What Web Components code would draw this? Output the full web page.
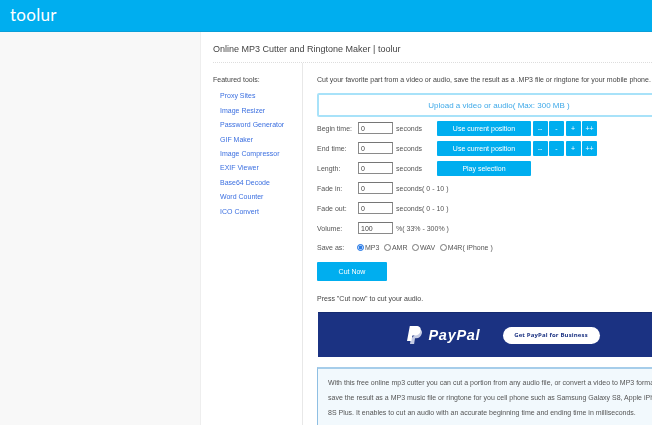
<!DOCTYPE html>
<html>
<head>
<meta charset="utf-8">
<title>toolur</title>
<style>
html, body { margin: 0; height: 425px; overflow: hidden; background: #f8f8f8; }
body { font: 7px "Liberation Sans", Arial, sans-serif; color: #444; }
tool-page { filter: blur(.3px); }
</style>
</head>
<body>
<tool-header></tool-header>
<tool-page>
  <tool-sidebar slot="side"></tool-sidebar>
  <cutter-form slot="main"></cutter-form>
</tool-page>

<script>
'use strict';

class ToolHeader extends HTMLElement {
  constructor() {
    super();
    this.attachShadow({mode: 'open'}).innerHTML = `
      <style>
        :host { display: block; height: 31px; background: #00aeef; border-bottom: 1px solid #0a9fd8; box-sizing: content-box; }
        a { display: block; padding: 4px 0 0 10px; font: 400 17px/22px Lato, sans-serif; letter-spacing: .3px; color: #fff; }
      </style>
      <a>toolur</a>`;
  }
}

class ToolPage extends HTMLElement {
  constructor() {
    super();
    this.attachShadow({mode: 'open'}).innerHTML = `
      <style>
        :host { display: block; margin-left: 200px; width: 700px; height: 393px; background: #fff; border-left: 1px solid #eee; box-sizing: border-box; padding: 0 12px; }
        h1 { margin: 0; height: 31px; box-sizing: border-box; padding-top: 11px; font: 400 9px/13px "Liberation Sans", sans-serif; color: #444; border-bottom: 1px dotted #ddd; }
        .cols { display: flex; }
        .side { width: 89px; flex: none; }
        .main { flex: 1; min-width: 0; border-left: 1px solid #e8e8e8; padding-left: 14px; }
      </style>
      <h1>Online MP3 Cutter and Ringtone Maker | toolur</h1>
      <div class="cols">
        <div class="side"><slot name="side"></slot></div>
        <div class="main"><slot name="main"></slot></div>
      </div>`;
  }
}

class ToolSidebar extends HTMLElement {
  constructor() {
    super();
    var tools = ['Proxy Sites', 'Image Resizer', 'Password Generator', 'GIF Maker', 'Image Compressor',
      'EXIF Viewer', 'Base64 Decode', 'Word Counter', 'ICO Convert'];
    this.attachShadow({mode: 'open'}).innerHTML = `
      <style>
        :host { display: block; padding-top: 10px; font: 7px/14.4px "Liberation Sans", sans-serif; }
        p { margin: 0 0 2px; color: #444; }
        a { display: block; margin-left: 7px; color: #3b6fe0; white-space: nowrap; }
      </style>
      <p>Featured tools:</p>
      ${tools.map(function(t) { return '<a>' + t + '</a>'; }).join('')}`;
  }
}

class FormRow extends HTMLElement {
  constructor() {
    super();
    this.attachShadow({mode: 'open'}).innerHTML = `
      <style>
        :host { display: flex; align-items: center; height: 20px; font: 7px "Liberation Sans", sans-serif; color: #555; white-space: nowrap; }
        .label { width: 41px; flex: none; }
        .field { display: flex; align-items: center; }
      </style>
      <span class="label"><slot name="label"></slot></span>
      <div class="field"><slot></slot></div>`;
  }
}

class BlueBtn extends HTMLElement {
  constructor() {
    super();
    this.attachShadow({mode: 'open'}).innerHTML = `
      <style>
        :host { display: flex; align-items: center; justify-content: center; height: 15px; background: #00aeef; color: #fff; border-radius: 1px; font: 7px "Liberation Sans", sans-serif; flex: none; }
      </style>
      <slot></slot>`;
  }
}

class NumBox extends HTMLElement {
  constructor() {
    super();
    this.attachShadow({mode: 'open'}).innerHTML = `
      <style>
        :host { display: block; width: 35px; height: 12px; box-sizing: border-box; border: 1px solid #8a8a8a; border-top-color: #767676; padding-left: 2px; font: 7px/11px "Liberation Sans", sans-serif; color: #444; background: #fff; flex: none; }
      </style>
      <slot></slot>`;
  }
}

class RadioOpt extends HTMLElement {
  constructor() {
    super();
    var on = this.hasAttribute('checked');
    this.attachShadow({mode: 'open'}).innerHTML = `
      <style>
        :host { display: inline-flex; align-items: center; margin-right: 4.5px; }
        i { display: block; width: 7px; height: 7px; box-sizing: border-box; margin-right: 1px; border-radius: 50%; border: 1px solid ${on ? '#2f7fe8' : '#777'}; background: ${on ? '#2f7fe8' : '#fff'}; box-shadow: ${on ? 'inset 0 0 0 .6px #fff' : 'none'}; }
      </style>
      <i></i><slot></slot>`;
  }
}

class PaypalBanner extends HTMLElement {
  constructor() {
    super();
    this.attachShadow({mode: 'open'}).innerHTML = `
      <style>
        :host { display: flex; align-items: center; width: 340px; height: 45px; background: #1b3282; box-sizing: border-box; border-top: 1px solid #142a70; margin-left: 1px; color: #fff; }
        svg { margin-left: 89px; flex: none; }
        b { margin-left: 6.5px; font: italic 700 14.5px "Liberation Sans", sans-serif; letter-spacing: .7px; width: 59px; flex: none; }
        span { margin-left: 15px; width: 97px; height: 17px; border-radius: 9px; background: #fff; color: #1b3282; display: flex; align-items: center; justify-content: center; font: 700 6px "Open Sans", sans-serif; letter-spacing: .15px; flex: none; }
      </style>
      <svg width="15" height="18" viewBox="0 0 15 18">
        <path fill="#c5cce4" d="M13.500 3.500c1.200.8 1.700 2.100 1.400 3.800-.6 3.100-2.900 5-5.900 5H8L7.100 18H3l.7-5z"/>
        <path fill="#fff" d="M2.800 0h6.400c3.200 0 5 1.700 4.500 4.600-.5 3.200-2.800 5-5.900 5H5.400L4.400 15H0z"/>
      </svg>
      <b>PayPal</b>
      <span>Get PayPal for Business</span>`;
  }
}

class InfoBox extends HTMLElement {
  constructor() {
    super();
    this.attachShadow({mode: 'open'}).innerHTML = `
      <style>
        :host { display: block; width: 420px; height: 70px; box-sizing: border-box; margin-top: 10px; padding: 6px 10px; background: #f2f9fd; border-top: 2px solid #a6cdea; border-left: 1px solid #8fbfe3; font: 7px/15px "Liberation Sans", sans-serif; color: #555; white-space: nowrap; }
      </style>
      <slot></slot>`;
  }
}

class CutterForm extends HTMLElement {
  constructor() {
    super();
    var timeBtns = `
      <blue-btn style="width:94px">Use current position</blue-btn>
      <blue-btn class="s">--</blue-btn>
      <blue-btn class="s">-</blue-btn>
      <blue-btn class="s">+</blue-btn>
      <blue-btn class="s">++</blue-btn>`;
    this.attachShadow({mode: 'open'}).innerHTML = `
      <style>
        :host { display: block; padding-top: 10px; font: 7px "Liberation Sans", sans-serif; color: #555; white-space: nowrap; }
        p { margin: 0; line-height: 14px; color: #444; }
        .upload { display: flex; align-items: center; justify-content: center; width: 364px; height: 24px; margin: 6px 0 1px; box-sizing: border-box; background: #fff; border: 2px solid #a8e2f9; border-radius: 2px; color: #3fa9e8; font-size: 8px; }
        .sec { margin-left: 3px; width: 41px; }
        blue-btn.s { width: 15px; margin-left: 1.5px; }
        .cut { width: 70px; height: 19px; margin: 5px 0 0; }
        .press { margin: 11px 0 6px; }
        .save { margin: -1px 0 0; }
        radio-opt:first-of-type { margin-left: -1px; }
      </style>
      <p>Cut your favorite part from a video or audio, save the result as a .MP3 file or ringtone for your mobile phone.</p>
      <div class="upload">Upload a video or audio( Max: 300 MB )</div>
      <form-row><span slot="label">Begin time:</span><num-box>0</num-box><span class="sec">seconds</span>${timeBtns}</form-row>
      <form-row><span slot="label">End time:</span><num-box>0</num-box><span class="sec">seconds</span>${timeBtns}</form-row>
      <form-row><span slot="label">Length:</span><num-box>0</num-box><span class="sec">seconds</span><blue-btn style="width:94px">Play selection</blue-btn></form-row>
      <form-row><span slot="label">Fade in:</span><num-box>0</num-box><span style="margin-left:3px">seconds( 0 - 10 )</span></form-row>
      <form-row><span slot="label">Fade out:</span><num-box>0</num-box><span style="margin-left:3px">seconds( 0 - 10 )</span></form-row>
      <form-row><span slot="label">Volume:</span><num-box>100</num-box><span style="margin-left:3px">%( 33% - 300% )</span></form-row>
      <form-row class="save"><span slot="label">Save as:</span>
        <radio-opt checked>MP3</radio-opt><radio-opt>AMR</radio-opt><radio-opt>WAV</radio-opt><radio-opt>M4R( iPhone )</radio-opt>
      </form-row>
      <blue-btn class="cut">Cut Now</blue-btn>
      <p class="press">Press "Cut now" to cut your audio.</p>
      <paypal-banner></paypal-banner>
      <info-box>With this free online mp3 cutter you can cut a portion from any audio file, or convert a video to MP3 format, then<br>
      save the result as a MP3 music file or ringtone for you cell phone such as Samsung Galaxy S8, Apple iPhone 8, iPhone<br>
      8S Plus. It enables to cut an audio with an accurate beginning time and ending time in milliseconds.</info-box>`;
  }
}

customElements.define('tool-header', ToolHeader);
customElements.define('tool-page', ToolPage);
customElements.define('tool-sidebar', ToolSidebar);
customElements.define('form-row', FormRow);
customElements.define('blue-btn', BlueBtn);
customElements.define('num-box', NumBox);
customElements.define('radio-opt', RadioOpt);
customElements.define('paypal-banner', PaypalBanner);
customElements.define('info-box', InfoBox);
customElements.define('cutter-form', CutterForm);
</script>
</body>
</html>
